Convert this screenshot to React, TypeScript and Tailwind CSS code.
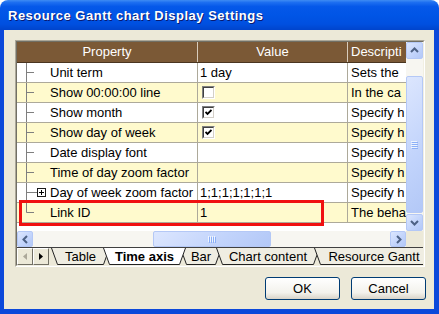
import React from "react";

type Row = {
  name: string;
  value?: string;
  check?: boolean;
  desc: string;
  yellow: boolean;
  expand?: boolean;
  last?: boolean;
};

const rows: Row[] = [
  { name: "Unit term", value: "1 day", desc: "Sets the", yellow: false },
  { name: "Show 00:00:00 line", check: false, desc: "In the ca", yellow: true },
  { name: "Show month", check: true, desc: "Specify h", yellow: false },
  { name: "Show day of week", check: true, desc: "Specify h", yellow: true },
  { name: "Date display font", desc: "Specify h", yellow: false },
  { name: "Time of day zoom factor", desc: "Specify h", yellow: true },
  { name: "Day of week zoom factor", value: "1;1;1;1;1;1;1", desc: "Specify h", yellow: false, expand: true },
  { name: "Link ID", value: "1", desc: "The beha", yellow: true, last: true },
];

const tabs = [
  { label: "Table", w: 59, cls: "w-[59px] ml-[2px]" },
  { label: "Time axis", w: 83, cls: "w-[83px] ml-[-7px]", active: true },
  { label: "Bar", w: 42, cls: "w-[42px] ml-[-6px]" },
  { label: "Chart content", w: 104, cls: "w-[104px] ml-[-6px]" },
  { label: "Resource Gantt", w: 120, cls: "w-[120px] ml-[-6px]" },
];

const lunaBtn =
  "flex items-center justify-center rounded-[2px] border border-[#B4C8F6] bg-[linear-gradient(135deg,#DCE6FE,#C1D3FB_60%,#B3C8F7)]";

function Chevron({ dir }: { dir: "up" | "down" | "left" | "right" }) {
  const pts = {
    up: "1,6 4.5,2.5 8,6",
    down: "1,3 4.5,6.5 8,3",
    left: "6,1 2.5,4.5 6,8",
    right: "3,1 6.5,4.5 3,8",
  }[dir];
  return (
    <svg width="9" height="9" viewBox="0 0 9 9">
      <polyline points={pts} fill="none" stroke="#4D6185" strokeWidth="2" />
    </svg>
  );
}

function Grip({ vertical }: { vertical?: boolean }) {
  return vertical ? (
    <svg width="7" height="8" viewBox="0 0 7 8">
      {[0, 2, 4, 6].map((y) => (
        <g key={y}>
          <line x1="0" y1={y + 0.5} x2="6" y2={y + 0.5} stroke="#EEF4FE" />
          <line x1="1" y1={y + 1.5} x2="7" y2={y + 1.5} stroke="#8CB0F8" />
        </g>
      ))}
    </svg>
  ) : (
    <svg width="8" height="7" viewBox="0 0 8 7">
      {[0, 2, 4, 6].map((x) => (
        <g key={x}>
          <line x1={x + 0.5} y1="0" x2={x + 0.5} y2="6" stroke="#EEF4FE" />
          <line x1={x + 1.5} y1="1" x2={x + 1.5} y2="7" stroke="#8CB0F8" />
        </g>
      ))}
    </svg>
  );
}

function TreeLine({ last, expand }: { last?: boolean; expand?: boolean }) {
  return (
    <svg width="33" height="19" viewBox="0 0 33 19" className="shrink-0">
      <line x1="9.5" y1="0" x2="9.5" y2={last ? 9.5 : 19} stroke="#7F7F7F" />
      <line x1="9.5" y1="9.5" x2={expand ? 20 : 17} y2="9.5" stroke="#7F7F7F" />
      {expand && (
        <g>
          <rect x="20.5" y="5.5" width="8" height="8" fill="#fff" stroke="#1A1A1A" />
          <line x1="22" y1="9.5" x2="27" y2="9.5" stroke="#000" />
          <line x1="24.5" y1="7" x2="24.5" y2="12" stroke="#000" />
        </g>
      )}
    </svg>
  );
}

function Check({ on }: { on: boolean }) {
  return (
    <span className="ml-[2px] flex w-[13px] h-[13px] border border-t-[#808080] border-l-[#808080] border-r-white border-b-white">
      <span className="flex flex-1 items-center justify-center border border-t-[#404040] border-l-[#404040] border-r-[#D4D0C8] border-b-[#D4D0C8] bg-white">
        {on && (
          <svg width="7" height="7" viewBox="0 0 7 7">
            <polyline points="0.5,3 2.5,5 6.5,1" fill="none" stroke="#000" strokeWidth="1.8" />
          </svg>
        )}
      </span>
    </span>
  );
}

function Tab({ label, w, cls, active }: { label: string; w: number; cls: string; active?: boolean }) {
  const s = 6;
  return (
    <div className={`relative shrink-0 h-[17px] flex items-center justify-center ${cls} ${active ? "z-10 font-bold" : ""}`}>
      <svg className="absolute inset-0" width={w} height="17" viewBox={`0 0 ${w} 17`}>
        <polygon points={`0,0 ${s},16 ${w - s},16 ${w},0`} fill={active ? "#FFFFFF" : "#EFEDE2"} />
        <polyline points={`0.5,0 ${s + 0.5},16.5 ${w - s - 0.5},16.5 ${w - 0.5},0`} fill="none" stroke="#222" />
      </svg>
      <span className="relative whitespace-nowrap">{label}</span>
    </div>
  );
}

function NavButton({ dir, disabled }: { dir: "left" | "right"; disabled?: boolean }) {
  return (
    <div className="w-[16px] h-[17px] shrink-0 flex items-center justify-center border border-t-white border-l-white border-r-[#716F64] border-b-[#716F64] bg-[#ECE9D8]">
      <svg width="4" height="7" viewBox="0 0 4 7">
        <polygon
          points={dir === "left" ? "4,0 0,3.5 4,7" : "0,0 4,3.5 0,7"}
          fill={disabled ? "#ACA899" : "#000"}
        />
      </svg>
    </div>
  );
}

export default function App() {
  return (
    <div className="w-[439px] h-[314px] bg-white font-['Liberation_Sans',Arial,sans-serif] text-[13px] text-black">
      <div className="h-full flex flex-col rounded-t-[8px] overflow-hidden">
        <div className="h-[30px] shrink-0 flex items-center pl-[8px] pt-[2px] bg-[linear-gradient(to_bottom,#3F8CF3_0%,#1D6FF1_8%,#0558E9_22%,#0055E6_50%,#0050E0_80%,#0044CC_100%)] text-white font-bold tracking-[0.5px] [text-shadow:1px_1px_0_#0A1A70]">
          Resource Gantt chart Display Settings
        </div>

        <div className="flex-1 flex flex-col bg-[#ECE9D8] border-l-4 border-r-[5px] border-b-[5px] border-[#0B48DA] pl-[11px] pr-[9px] pt-[10px]">
          <div className="w-[410px] border border-t-[#ACA899] border-l-[#ACA899] border-r-white border-b-white">
            <div className="flex flex-col border border-t-[#716F64] border-l-[#716F64] border-r-[#F1EFE2] border-b-[#F1EFE2]">
              <div className="flex h-[189px]">
                <div className="relative w-[389px] shrink-0 bg-white overflow-hidden">
                  <div className="flex h-[21px] bg-[#7B5936] text-white border-b border-[#4A3520]">
                    <div className="w-[181px] shrink-0 flex items-center justify-center border-r border-[#D8CCBC]">Property</div>
                    <div className="w-[150px] shrink-0 flex items-center justify-center border-r border-[#D8CCBC]">Value</div>
                    <div className="w-[150px] shrink-0 flex items-center pl-[3px] whitespace-nowrap">Descripti</div>
                  </div>
                  {rows.map((r) => (
                    <div
                      key={r.name}
                      className={`flex h-[20px] border-b border-[#ADA99A] ${r.yellow ? "bg-[#FFFACD]" : "bg-white"}`}
                    >
                      <div className="w-[181px] shrink-0 flex items-center border-r border-[#ADA99A]">
                        <TreeLine last={r.last} expand={r.expand} />
                        <span className="whitespace-nowrap">{r.name}</span>
                      </div>
                      <div className="w-[150px] shrink-0 flex items-center pl-[2px] border-r border-[#ADA99A]">
                        {r.check !== undefined ? <Check on={r.check} /> : <span>{r.value}</span>}
                      </div>
                      <div className="w-[150px] shrink-0 flex items-center pl-[3px] whitespace-nowrap">{r.desc}</div>
                    </div>
                  ))}
                  <div className="absolute left-[2px] top-[158px] w-[305px] h-[26px] border-[3px] border-[#F01010]" />
                </div>

                <div className="w-[17px] shrink-0 flex flex-col bg-[#F7F6F1]">
                  <div className={`h-[17px] shrink-0 ${lunaBtn}`}>
                    <Chevron dir="up" />
                  </div>
                  <div className="flex-1 flex flex-col pt-[17px] pb-[1px]">
                    <div className={`flex-1 ${lunaBtn}`}>
                      <Grip vertical />
                    </div>
                  </div>
                  <div className={`h-[17px] shrink-0 ${lunaBtn}`}>
                    <Chevron dir="down" />
                  </div>
                </div>
              </div>

              <div className="flex h-[16px]">
                <div className="w-[389px] shrink-0 flex bg-[#F7F6F1]">
                  <div className={`w-[16px] shrink-0 ${lunaBtn}`}>
                    <Chevron dir="left" />
                  </div>
                  <div className="flex-1 flex pl-[120px]">
                    <div className={`w-[118px] ${lunaBtn}`}>
                      <Grip />
                    </div>
                  </div>
                  <div className={`w-[16px] shrink-0 ${lunaBtn}`}>
                    <Chevron dir="right" />
                  </div>
                </div>
                <div className="flex-1 bg-[#ECE9D8]" />
              </div>

              <div className="h-px bg-[#404040]" />

              <div className="flex h-[17px] overflow-hidden bg-[#ECE9D8]">
                <NavButton dir="left" disabled />
                <NavButton dir="right" />
                {tabs.map((t) => (
                  <Tab key={t.label} label={t.label} w={t.w} cls={t.cls} active={t.active} />
                ))}
              </div>
            </div>
          </div>

          <div className="mt-[10px] mr-[-1px] flex justify-end gap-[11px]">
            <button className="w-[75px] h-[23px] rounded-[3px] border border-[#003C74] bg-[linear-gradient(to_bottom,#FFFFFF,#F3F2EC_70%,#D9D4C8)] text-black">
              OK
            </button>
            <button className="w-[75px] h-[23px] rounded-[3px] border border-[#003C74] bg-[linear-gradient(to_bottom,#FFFFFF,#F3F2EC_70%,#D9D4C8)] text-black">
              Cancel
            </button>
          </div>
        </div>
      </div>
    </div>
  );
}
